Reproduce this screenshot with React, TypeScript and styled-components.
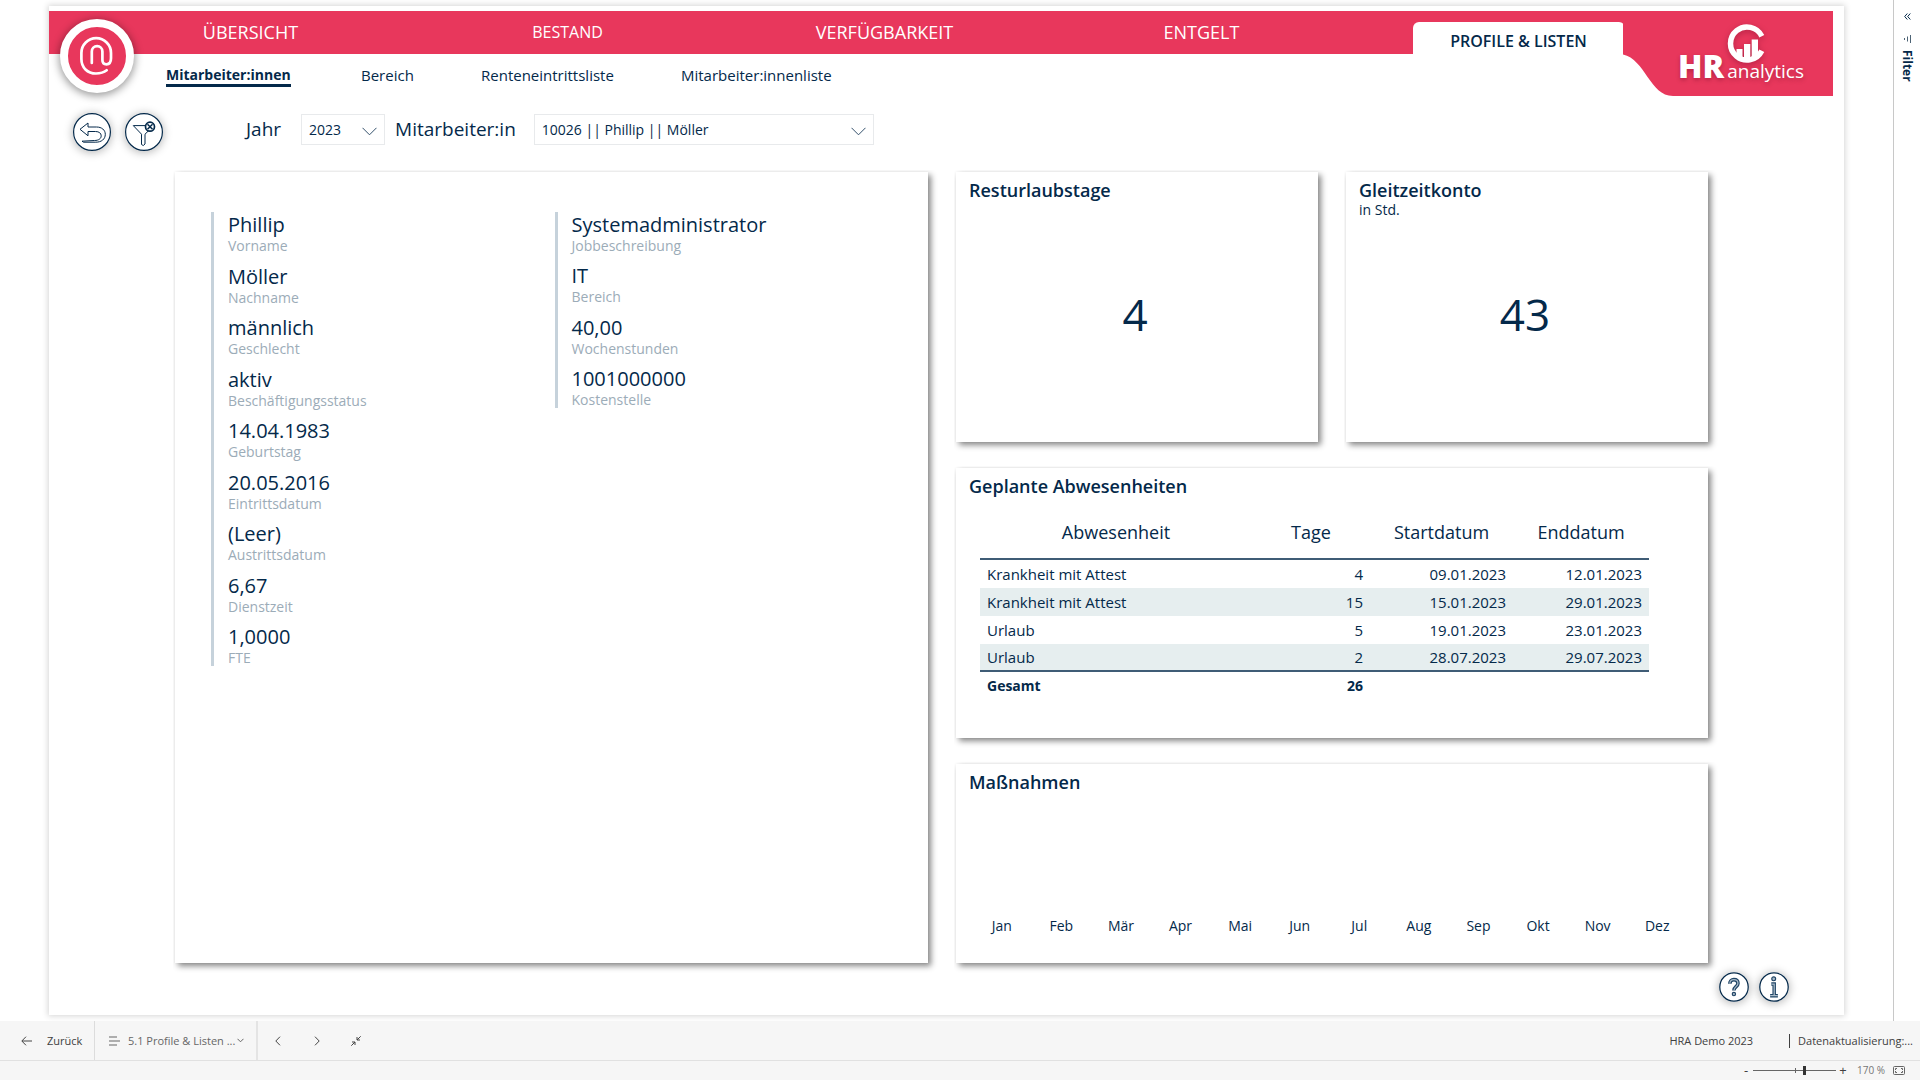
import React, { useState } from "react";
import styled, { createGlobalStyle, css } from "styled-components";

const navy = "#04294a";
const red = "#e8375c";
const report = `"Trebuchet MS", "Open Sans", "Noto Sans", sans-serif`;
const chrome = `"Segoe UI", "Open Sans", "Noto Sans", sans-serif`;

const GlobalStyle = createGlobalStyle`
  *, *::before, *::after { box-sizing: border-box; }
  body { margin: 0; background: #fff; color: ${navy}; font-family: ${report}; }
  button, select, input { font: inherit; color: inherit; }
  h2, dl, dt, dd, p { margin: 0; }
`;

const Shell = styled.div`
  display: flex;
  flex-direction: column;
  min-height: 100vh;
`;

const Workspace = styled.div`
  flex: 1;
  display: flex;
`;

const Canvas = styled.div`
  flex: 1;
  display: flex;
  flex-direction: column;
  margin: 6px 49px 6px 49px;
  padding-top: 5px;
  background: #fff;
  box-shadow: 0 0 6px 1px rgba(0, 0, 0, 0.17);
`;

const Header = styled.header`
  position: relative;
  margin-right: 11px;
  padding: 0 156px 0 43px;
  background: ${red};
`;

const Badge = styled.a`
  position: absolute;
  z-index: 2;
  left: 11px;
  top: 8px;
  width: 74px;
  height: 74px;
  border: 8px solid #fff;
  border-radius: 50%;
  background: ${red};
  box-shadow: 0 2px 8px 1px rgba(0, 0, 0, 0.4);
`;

const MainNav = styled.nav`
  display: grid;
  grid-template-columns: repeat(5, 1fr);
  justify-items: center;
  align-items: end;
  height: 43px;
`;

const MainLink = styled.a<{ $small?: boolean }>`
  color: #fff;
  font-size: ${(p) => (p.$small ? 16 : 18)}px;
  line-height: 43px;
  text-decoration: none;
`;

const ActiveTab = styled.a`
  width: 212px;
  height: 32px;
  border-radius: 6px 6px 0 0;
  background: #fff;
  color: ${navy};
  font-size: 16px;
  font-weight: 600;
  line-height: 38px;
  text-align: center;
  text-decoration: none;
`;

const Brand = styled.div`
  position: absolute;
  top: 0;
  right: 0;
  width: 210px;
  height: 85px;
  color: #fff;
`;

const BrandShape = styled.svg`
  position: absolute;
  inset: 0;
`;

const BrandName = styled.div`
  position: absolute;
  left: 55px;
  bottom: 9px;
  display: flex;
  align-items: baseline;
  gap: 3px;
  line-height: 32px;
  text-shadow: 0 2px 4px rgba(90, 0, 30, 0.35);
`;

const BrandStrong = styled.span`
  font-family: "Open Sans", sans-serif;
  font-size: 32px;
  font-weight: 800;
`;

const BrandLight = styled.span`
  font-family: "Open Sans", sans-serif;
  font-size: 19px;
`;

const SubNav = styled.nav`
  display: grid;
  grid-template-columns: 195px 120px 200px max-content;
  padding: 12px 0 0 117px;
`;

const SubLink = styled.a<{ $active?: boolean }>`
  justify-self: start;
  color: ${navy};
  font-size: 15px;
  line-height: 18px;
  text-decoration: none;
  ${(p) =>
    p.$active &&
    css`
      border-bottom: 3px solid ${navy};
      font-size: 14px;
      font-weight: 700;
    `}
`;

const FilterRow = styled.div`
  display: flex;
  align-items: center;
  margin-top: 20px;
  padding: 0 24px;
`;

const RoundButton = styled.button<{ $size: number }>`
  flex: none;
  width: ${(p) => p.$size}px;
  height: ${(p) => p.$size}px;
  padding: 0;
  border: 0;
  border-radius: 50%;
  background: #fff;
  box-shadow: 0 1px 8px 1px rgba(0, 0, 0, 0.26);
  cursor: pointer;

  svg { display: block; }
`;

const RoundGroup = styled.div`
  display: flex;
  gap: 14px;
  margin-right: 83px;
  padding-top: 6px;
`;

const FieldLabel = styled.label`
  font-size: 19px;
  line-height: 32px;
`;

const SelectBox = styled.div<{ $width: number; $before: number; $after: number }>`
  position: relative;
  width: ${(p) => p.$width}px;
  margin: 0 ${(p) => p.$after}px 0 ${(p) => p.$before}px;

  select {
    display: block;
    width: 100%;
    height: 31px;
    padding: 0 30px 0 7px;
    border: 1px solid #e8eaec;
    border-radius: 0;
    appearance: none;
    background: #fff;
    font-size: 14px;
  }

  svg {
    position: absolute;
    right: 8px;
    top: 13px;
    pointer-events: none;
  }
`;

const Board = styled.main`
  flex: 1;
  display: grid;
  grid-template-columns: 753fr 362fr 362fr;
  grid-template-rows: 270fr 269fr 199fr;
  column-gap: 28px;
  row-gap: 26px;
  padding: 21px 136px 0 126px;
`;

const Card = styled.section<{ $tall?: boolean; $wide?: boolean }>`
  display: flex;
  flex-direction: column;
  background: #fff;
  box-shadow: 3px 3px 6px rgba(0, 0, 0, 0.48), 0 0 2px rgba(0, 0, 0, 0.04);
  clip-path: inset(-2px -12px -12px -2px);
  ${(p) => p.$tall && "grid-row: 1 / 4;"}
  ${(p) => p.$wide && "grid-column: 2 / 4;"}
`;

const CardTitle = styled.h2`
  padding: 6px 13px 0;
  font-size: 18px;
  font-weight: 600;
  line-height: 24px;
`;

const CardNote = styled.p`
  padding: 0 13px;
  font-size: 14px;
  line-height: 16px;
`;

const Kpi = styled.p<{ $noted?: boolean }>`
  flex: 1;
  display: grid;
  place-items: center;
  padding: 0 4px ${(p) => (p.$noted ? 32 : 16)}px 0;
  font-size: 44px;
  line-height: 60px;
`;

const Details = styled.div`
  display: grid;
  grid-template-columns: 1fr 1fr;
  align-items: start;
  padding: 40px 30px 40px 36px;
`;

const DetailList = styled.dl<{ $height: number }>`
  display: flex;
  flex-direction: column;
  justify-content: space-between;
  min-height: ${(p) => p.$height}px;
  padding-left: 14px;
  border-left: 3px solid #c6d2db;
`;

const Detail = styled.div`
  display: flex;
  flex-direction: column-reverse;
`;

const DetailName = styled.dt`
  color: #9cacb8;
  font-size: 14px;
  line-height: 16px;
`;

const DetailValue = styled.dd`
  font-size: 20px;
  line-height: 26px;
`;

const AbsenceTable = styled.table`
  width: calc(100% - 85px);
  margin: 7px 61px 0 24px;
  border-collapse: separate;
  border-spacing: 0;
  table-layout: fixed;
  font-size: 15px;

  th, td { padding: 0 7px; text-align: right; }
  th:first-child, td:first-child { text-align: left; }

  thead th, thead th:first-child {
    height: 55px;
    border-bottom: 2px solid #3f5c76;
    font-size: 18px;
    font-weight: 400;
    text-align: center;
  }

  tbody td { height: 28px; }
  tbody tr:nth-child(even) td { background: #e6eeef; }
  tbody tr:last-child td { border-bottom: 2px solid #3f5c76; }
  tfoot th, tfoot td { height: 27px; font-size: 14px; font-weight: 700; }
`;

const Months = styled.div`
  display: grid;
  grid-template-columns: repeat(12, 1fr);
  margin-top: auto;
  padding: 0 21px 27px 16px;
  font-size: 14px;
  line-height: 20px;
  text-align: center;
`;

const HelpRow = styled.div`
  display: flex;
  justify-content: flex-end;
  gap: 10px;
  padding: 9px 55px 13px;
`;

const FilterPane = styled.aside`
  display: flex;
  flex-direction: column;
  align-items: center;
  width: 27px;
  border-left: 1px solid #c8c8c8;
  font-family: ${chrome};

  button {
    display: flex;
    flex-direction: column;
    align-items: center;
    padding: 0;
    border: 0;
    background: none;
  }
`;

const PaneToggle = styled.button`
  height: 32px;
  justify-content: center;
`;

const PaneLabel = styled.span`
  margin-top: 6px;
  font-size: 12px;
  font-weight: 700;
  line-height: 14px;
  writing-mode: vertical-rl;
`;

const Footer = styled.footer`
  background: #f6f6f6;
  color: #404040;
  font-family: ${chrome};
  font-size: 11px;
`;

const PageBar = styled.div`
  display: flex;
  align-items: stretch;
  height: 40px;
  border-bottom: 1px solid #e1e1e1;
  white-space: nowrap;

  button {
    display: flex;
    align-items: center;
    padding: 0;
    border: 0;
    background: none;
    cursor: pointer;
  }
`;

const BackButton = styled.button`
  width: 95px;
  gap: 15px;
  && { padding-left: 21px; border-right: 1px solid #dcdcdc; }
`;

const PageButton = styled.button`
  width: 163px;
  gap: 8px;
  && { padding-left: 14px; border-right: 2px solid #e4e4e4; color: #666; }
`;

const PageName = styled.span`
  width: 101px;
  text-align: left;
`;

const StepButton = styled.button`
  width: 39px;
  justify-content: center;
`;

const StatusText = styled.span<{ $divided?: boolean }>`
  align-self: center;
  line-height: 14px;
  ${(p) =>
    p.$divided
      ? "margin: 0 7px 0 36px; padding-left: 8px; border-left: 1px solid #404040;"
      : "margin-left: auto;"}
`;

const ZoomBar = styled.div`
  display: flex;
  align-items: center;
  justify-content: flex-end;
  height: 19px;
  padding-right: 15px;
  line-height: 19px;

  button {
    display: grid;
    place-items: center;
    width: 8px;
    height: 19px;
    padding: 0;
    border: 0;
    background: none;
    font-size: 13px;
  }
`;

const ZoomSlider = styled.input`
  width: 83px;
  height: 13px;
  margin: 0 3px;
  appearance: none;
  background:
    linear-gradient(#666, #666) 42px center / 1px 5px no-repeat,
    linear-gradient(#666, #666) center / 100% 1px no-repeat;

  &::-webkit-slider-thumb {
    appearance: none;
    width: 3px;
    height: 9px;
    background: #333;
  }
`;

const ZoomValue = styled.output`
  margin: 0 8px 0 10px;
  color: #777;
  font-size: 10px;
`;

const Chevron = () => (
  <svg width="15" height="9" viewBox="0 0 15 9" fill="none" stroke="#33506b">
    <path d="M.5.8l7 7 7-7" />
  </svg>
);

const AtMark = () => (
  <svg width="58" height="58" viewBox="0 0 58 58" fill="none" stroke="#fff" strokeWidth="2.700" strokeLinecap="round">
    <path d="M23.800 36V24.500a5.300 5.300 0 0 1 10.600 0v8.500c0 2.800 1.600 4.300 4 4.300 2.900 0 4.600-2.300 4.600-6V26a14.800 14.800 0 0 0-29.600 0v6c0 8.500 6 14.500 14.600 14.500 4.500 0 8-1.100 10.700-3.200" />
  </svg>
);

const BackIcon = () => (
  <svg width="38" height="38" viewBox="0 0 38 38" fill="none" stroke={navy}>
    <circle cx="19" cy="19" r="18.400" strokeWidth="1.200" />
    <path
      strokeWidth="1"
      d="M7 16.300l8-6.300v4h8.500c5.200 0 8.800 3 8.800 7.300 0 5-4 7.900-9.500 7.900H10.500l-1.500-1 12.500-.7c4 0 6.700-1.800 6.700-4.700 0-2.600-2.200-4.300-5.700-4.300H15v4.300z"
    />
  </svg>
);

const ClearFilterIcon = () => (
  <svg width="38" height="38" viewBox="0 0 38 38" fill="none" stroke={navy}>
    <circle cx="19" cy="19" r="18.400" strokeWidth="1.200" />
    <path d="M20.500 12.600H8.300l8.200 8.600v10.300l1.800 1 1.700-1.500v-9.800l3.500-3.400" />
    <circle cx="25" cy="13.700" r="4.500" strokeWidth="1.700" />
    <path strokeWidth="1.500" d="M22.500 11.200l5 5M27.500 11.200l-5 5" />
  </svg>
);

const QUESTION = "M11.200 12.200c0-2.600 1.700-4.300 4.200-4.300s4.200 1.500 4.200 3.900c0 3.200-4.200 3.500-4.200 7.200";
const INFO = "M12.700 12.500h3v12M11.500 24.500h8";

const HelpIcon = () => (
  <svg width="30" height="30" viewBox="0 0 31 31" fill="none">
    <circle cx="15.500" cy="15.500" r="14.700" stroke={navy} strokeWidth="1.300" />
    <path d={QUESTION} stroke="#1f4465" strokeWidth="3.700" />
    <path d={QUESTION} stroke="#a9bac8" strokeWidth="1.300" />
    <circle cx="15.400" cy="22.800" r="1.700" fill="#a9bac8" stroke="#1f4465" strokeWidth="1.200" />
  </svg>
);

const InfoIcon = () => (
  <svg width="30" height="30" viewBox="0 0 31 31" fill="none">
    <circle cx="15.500" cy="15.500" r="14.700" stroke={navy} strokeWidth="1.300" />
    <path d={INFO} stroke="#1f4465" strokeWidth="3.600" />
    <path d={INFO} stroke="#a9bac8" strokeWidth="1.300" />
    <circle cx="15.200" cy="7" r="2" fill="#a9bac8" stroke="#1f4465" strokeWidth="1.200" />
  </svg>
);

const BrandArt = () => (
  <BrandShape width="210" height="85" viewBox="0 0 210 85">
    <path fill={red} d="M0 0H210V85H50C27 85 22 48 0 43.500z" />
    <g style={{ filter: "drop-shadow(0 2px 3px rgba(90,0,30,.35))" }}>
      <path d="M138.800 25.200A16.500 16.500 0 1 0 138.800 39.800" fill="none" stroke="#fff" strokeWidth="5.500" />
      <path fill="#fff" d="M113.500 38h6v9h-6zM121 33h6.300v16h-6.300zM128.700 28.500h6.300v19h-6.300z" />
    </g>
  </BrandShape>
);

const personal = [
  ["Vorname", "Phillip"],
  ["Nachname", "Möller"],
  ["Geschlecht", "männlich"],
  ["Beschäftigungsstatus", "aktiv"],
  ["Geburtstag", "14.04.1983"],
  ["Eintrittsdatum", "20.05.2016"],
  ["Austrittsdatum", "(Leer)"],
  ["Dienstzeit", "6,67"],
  ["FTE", "1,0000"],
];

const job = [
  ["Jobbeschreibung", "Systemadministrator"],
  ["Bereich", "IT"],
  ["Wochenstunden", "40,00"],
  ["Kostenstelle", "1001000000"],
];

const absences = [
  ["Krankheit mit Attest", "4", "09.01.2023", "12.01.2023"],
  ["Krankheit mit Attest", "15", "15.01.2023", "29.01.2023"],
  ["Urlaub", "5", "19.01.2023", "23.01.2023"],
  ["Urlaub", "2", "28.07.2023", "29.07.2023"],
];

const months = ["Jan", "Feb", "Mär", "Apr", "Mai", "Jun", "Jul", "Aug", "Sep", "Okt", "Nov", "Dez"];

const Facts = ({ rows, height }: { rows: string[][]; height: number }) => (
  <DetailList $height={height}>
    {rows.map(([name, value]) => (
      <Detail key={name}>
        <DetailName>{name}</DetailName>
        <DetailValue>{value}</DetailValue>
      </Detail>
    ))}
  </DetailList>
);

export default function App() {
  const [zoom, setZoom] = useState(62);

  return (
    <Shell>
      <GlobalStyle />
      <Workspace>
        <Canvas>
          <Header>
            <Badge href="#" aria-label="Start">
              <AtMark />
            </Badge>
            <MainNav>
              <MainLink href="#">ÜBERSICHT</MainLink>
              <MainLink href="#" $small>BESTAND</MainLink>
              <MainLink href="#">VERFÜGBARKEIT</MainLink>
              <MainLink href="#">ENTGELT</MainLink>
              <ActiveTab href="#">PROFILE &amp; LISTEN</ActiveTab>
            </MainNav>
            <Brand>
              <BrandArt />
              <BrandName>
                <BrandStrong>HR</BrandStrong>
                <BrandLight>analytics</BrandLight>
              </BrandName>
            </Brand>
          </Header>

          <SubNav>
            <SubLink href="#" $active>Mitarbeiter:innen</SubLink>
            <SubLink href="#">Bereich</SubLink>
            <SubLink href="#">Renteneintrittsliste</SubLink>
            <SubLink href="#">Mitarbeiter:innenliste</SubLink>
          </SubNav>

          <FilterRow>
            <RoundGroup>
              <RoundButton $size={38} aria-label="Zurück"><BackIcon /></RoundButton>
              <RoundButton $size={38} aria-label="Filter löschen"><ClearFilterIcon /></RoundButton>
            </RoundGroup>
            <FieldLabel htmlFor="year">Jahr</FieldLabel>
            <SelectBox $width={84} $before={20} $after={10}>
              <select id="year"><option>2023</option></select>
              <Chevron />
            </SelectBox>
            <FieldLabel htmlFor="employee">Mitarbeiter:in</FieldLabel>
            <SelectBox $width={340} $before={18} $after={0}>
              <select id="employee"><option>10026 || Phillip || Möller</option></select>
              <Chevron />
            </SelectBox>
          </FilterRow>

          <Board>
            <Card $tall>
              <Details>
                <Facts rows={personal} height={454} />
                <Facts rows={job} height={196} />
              </Details>
            </Card>
            <Card>
              <CardTitle>Resturlaubstage</CardTitle>
              <Kpi>4</Kpi>
            </Card>
            <Card>
              <CardTitle>Gleitzeitkonto</CardTitle>
              <CardNote>in Std.</CardNote>
              <Kpi $noted>43</Kpi>
            </Card>
            <Card $wide>
              <CardTitle>Geplante Abwesenheiten</CardTitle>
              <AbsenceTable>
                <colgroup>
                  <col style={{ width: 272 }} />
                  <col style={{ width: 118 }} />
                  <col style={{ width: 143 }} />
                  <col style={{ width: 136 }} />
                </colgroup>
                <thead>
                  <tr>
                    <th scope="col">Abwesenheit</th>
                    <th scope="col">Tage</th>
                    <th scope="col">Startdatum</th>
                    <th scope="col">Enddatum</th>
                  </tr>
                </thead>
                <tbody>
                  {absences.map((row) => (
                    <tr key={row[2]}>
                      {row.map((cell, i) => <td key={i}>{cell}</td>)}
                    </tr>
                  ))}
                </tbody>
                <tfoot>
                  <tr>
                    <th scope="row">Gesamt</th>
                    <td>26</td>
                    <td />
                    <td />
                  </tr>
                </tfoot>
              </AbsenceTable>
            </Card>
            <Card $wide>
              <CardTitle>Maßnahmen</CardTitle>
              <Months>
                {months.map((m) => <span key={m}>{m}</span>)}
              </Months>
            </Card>
          </Board>

          <HelpRow>
            <RoundButton $size={30} aria-label="Hilfe"><HelpIcon /></RoundButton>
            <RoundButton $size={30} aria-label="Information"><InfoIcon /></RoundButton>
          </HelpRow>
        </Canvas>

        <FilterPane>
          <PaneToggle aria-label="Bereich erweitern">
            <svg width="7" height="7" viewBox="0 0 7 7" fill="none" stroke={navy}>
              <path d="M3.300.5l-2.600 3 2.600 3M6.300.5l-2.600 3 2.600 3" />
            </svg>
          </PaneToggle>
          <button>
            <svg width="10" height="12" viewBox="0 0 10 12" fill="none" stroke="#4d6375">
              <path d="M8.500 3v8M5.500 4.500v5M2.500 6v2" />
            </svg>
            <PaneLabel>Filter</PaneLabel>
          </button>
        </FilterPane>
      </Workspace>

      <Footer>
        <PageBar>
          <BackButton>
            <svg width="11" height="10" viewBox="0 0 11 10" fill="none" stroke="#444">
              <path d="M11 5H1M5 .7L.8 5 5 9.300" />
            </svg>
            Zurück
          </BackButton>
          <PageButton>
            <svg width="11" height="10" viewBox="0 0 11 10" fill="none" stroke="#666">
              <path d="M0 1h8M0 5h11M0 9h8" />
            </svg>
            <PageName>5.1 Profile &amp; Listen ...</PageName>
            <svg width="7" height="5" viewBox="0 0 7 5" fill="none" stroke="#666">
              <path d="M.5.800l3 3 3-3" />
            </svg>
          </PageButton>
          <StepButton aria-label="Vorherige Seite">
            <svg width="6" height="10" viewBox="0 0 6 10" fill="none" stroke="#444"><path d="M5 .7L.8 5 5 9.300" /></svg>
          </StepButton>
          <StepButton aria-label="Nächste Seite">
            <svg width="6" height="10" viewBox="0 0 6 10" fill="none" stroke="#444"><path d="M1 .7L5.200 5 1 9.300" /></svg>
          </StepButton>
          <StepButton aria-label="Vollbild beenden">
            <svg width="10" height="10" viewBox="0 0 10 10" fill="none" stroke="#444">
              <path d="M9.700.3L6 4M6 1v3h3M.3 9.700L4 6M1 6h3v3" />
            </svg>
          </StepButton>
          <StatusText>HRA Demo 2023</StatusText>
          <StatusText $divided>Datenaktualisierung:...</StatusText>
        </PageBar>
        <ZoomBar>
          <button aria-label="Verkleinern">-</button>
          <ZoomSlider
            type="range"
            aria-label="Zoom"
            value={zoom}
            onChange={(e) => setZoom(Number(e.target.value))}
          />
          <button aria-label="Vergrößern">+</button>
          <ZoomValue>170 %</ZoomValue>
          <svg width="12" height="9" viewBox="0 0 12 9" fill="none" stroke="#666">
            <rect x=".5" y=".5" width="11" height="8" rx="1" />
            <path d="M2.500 4V2.500H4M8 2.500h1.500V4M9.500 5v1.500H8M4 6.500H2.500V5" />
          </svg>
        </ZoomBar>
      </Footer>
    </Shell>
  );
}
